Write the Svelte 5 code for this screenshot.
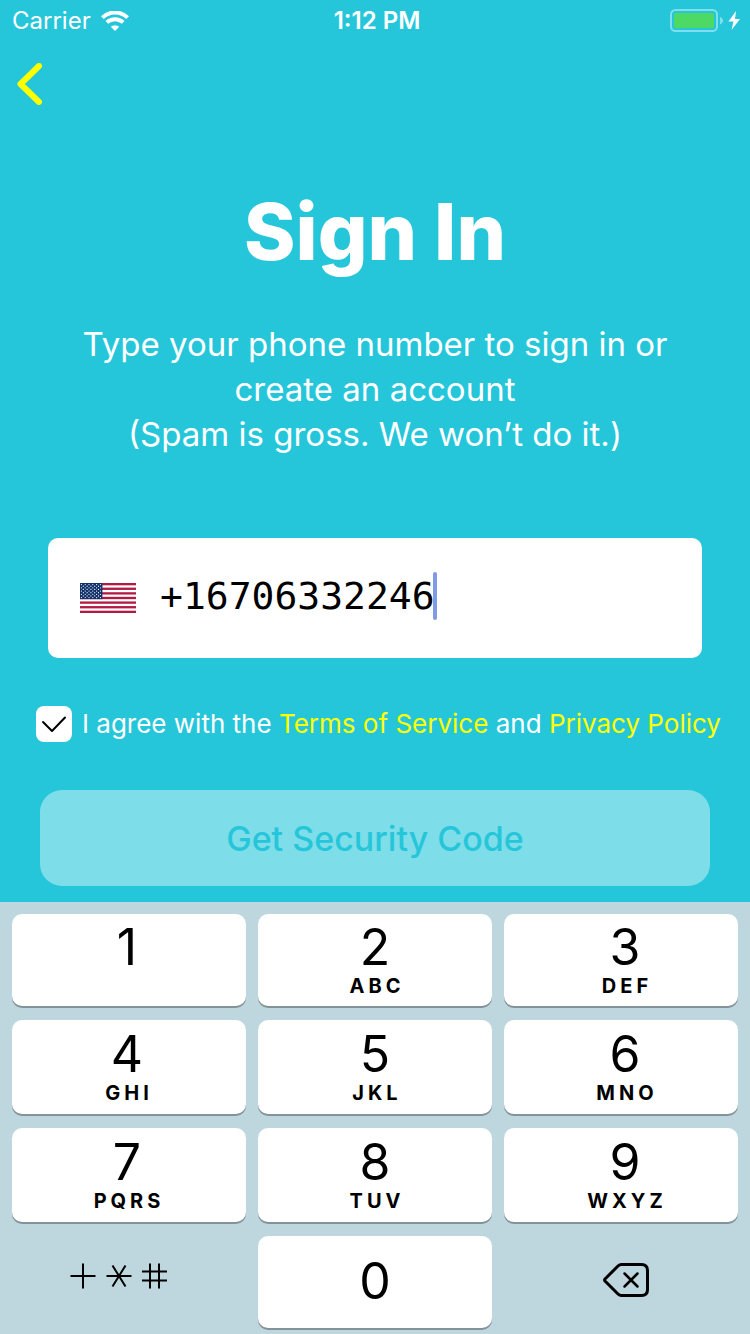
<script>
  let phone = $state('+16706332246');
  let agreed = $state(true);

  const keys = [
    { digit: '1', letters: '' },
    { digit: '2', letters: 'ABC' },
    { digit: '3', letters: 'DEF' },
    { digit: '4', letters: 'GHI' },
    { digit: '5', letters: 'JKL' },
    { digit: '6', letters: 'MNO' },
    { digit: '7', letters: 'PQRS' },
    { digit: '8', letters: 'TUV' },
    { digit: '9', letters: 'WXYZ' }
  ];

  const stripes = [0, 2, 4, 6, 8, 10, 12];
  const stars = Array.from({ length: 9 }, (_, row) =>
    Array.from({ length: row % 2 ? 5 : 6 }, (_, col) => ({
      x: 1.4 + col * 3.8 + (row % 2 ? 1.9 : 0),
      y: 1.6 + row * 1.62
    }))
  ).flat();

  const press = (digit) => (phone += digit);
  const erase = () => (phone = phone.slice(0, -1));
</script>

<div class="screen">
  <header class="status">
    <div class="carrier">
      <span>Carrier</span>
      <svg width="28" height="20" viewBox="0 0 28 20" aria-hidden="true">
        <g fill="none" stroke="#fff" stroke-width="4">
          <path d="M1.4 6.6A18 18 0 0 1 26.6 6.6" />
          <path d="M5.8 11.4A12 12 0 0 1 22.2 11.4" />
        </g>
        <path d="M9.8 15.8A6.2 6.2 0 0 1 18.2 15.8L14 20Z" fill="#fff" />
      </svg>
    </div>
    <time>1:12 PM</time>
    <div class="power">
      <svg width="72" height="24" viewBox="0 0 72 24" aria-hidden="true">
        <rect x="1" y="1" width="46" height="21" rx="4.5" fill="none" stroke="#7fdfea" stroke-width="2" />
        <rect x="4" y="4" width="40" height="15" rx="1.5" fill="#4cd964" />
        <path d="M50 8C54 9 54 14 50 15.5Z" fill="#7fdfea" />
        <path d="M66 2L58.5 12.5H63.5L61.5 21L70 10H65Z" fill="#fff" />
      </svg>
    </div>
  </header>

  <nav>
    <button class="back" type="button" aria-label="Back">
      <svg width="26" height="42" viewBox="0 0 26 42" aria-hidden="true">
        <path d="M22 3L3.5 21L22 39" fill="none" stroke="#ff0" stroke-width="6" stroke-linecap="round" stroke-linejoin="round" />
      </svg>
    </button>
  </nav>

  <main>
    <h1>Sign In</h1>
    <p class="intro">
      Type your phone number to sign in or<br />create an account<br />(Spam is gross. We won’t do it.)
    </p>

    <div class="field">
      <svg class="flag" width="56" height="30" viewBox="0 0 56 30" aria-hidden="true">
        <rect width="56" height="30" fill="#fff" />
        {#each stripes as n}
          <rect y={(n * 30) / 13} width="56" height={30 / 13} fill="#b31942" />
        {/each}
        <rect width="22.4" height="16.15" fill="#12316b" />
        {#each stars as star}
          <circle cx={star.x} cy={star.y} r="0.6" fill="#fff" />
        {/each}
      </svg>
      <input type="tel" aria-label="Phone number" size="12" bind:value={phone} />
      <span class="caret"></span>
    </div>

    <div class="agree">
      <input id="agree" type="checkbox" bind:checked={agreed} />
      <svg class="tick" width="36" height="36" viewBox="0 0 36 36" aria-hidden="true">
        {#if agreed}
          <path d="M7 16L16 25L29 11.5" fill="none" stroke="#000" stroke-width="2" stroke-linecap="round" stroke-linejoin="round" />
        {/if}
      </svg>
      <p>
        <label for="agree">I agree with the</label>
        <a href="#terms">Terms of Service</a> and <a href="#privacy">Privacy Policy</a>
      </p>
    </div>

    <button class="submit" type="button" disabled>Get Security Code</button>
  </main>

  <section class="keypad" aria-label="Keypad">
    {#each keys as key}
      <button class="key" type="button" onclick={() => press(key.digit)}>
        <span class="digit">{key.digit}</span>
        <span class="letters">{key.letters}</span>
      </button>
    {/each}
    <button class="key plain" type="button" aria-label="Symbols">
      <svg width="98" height="26" viewBox="0 0 98 26" aria-hidden="true">
        <g fill="none" stroke="#000" stroke-width="2">
          <path d="M0.5 13H25.5M13 0.5V25.5" />
          <path d="M36.5 13H61.5M42.5 2.5L55.5 23.5M55.5 2.5L42.5 23.5" />
          <path d="M72 8.5H97M72 17.5H97M80 0.5V25.5M89 0.5V25.5" />
        </g>
      </svg>
    </button>
    <button class="key zero" type="button" onclick={() => press('0')}>
      <span class="digit">0</span>
    </button>
    <button class="key plain delete" type="button" aria-label="Delete" onclick={erase}>
      <svg width="46" height="34" viewBox="0 0 46 34" aria-hidden="true">
        <g fill="none" stroke="#000" stroke-width="3" stroke-linecap="round" stroke-linejoin="round">
          <path d="M18.5 1.5H38.5Q44.5 1.5 44.5 7.5V26.5Q44.5 32.5 38.5 32.5H18.5Q16.5 32.5 15 31L2 18Q1.2 17 2 16L15 3Q16.5 1.5 18.5 1.5Z" />
          <path d="M21.5 10.5L34.5 23.5M34.5 10.5L21.5 23.5" stroke-width="2.5" />
        </g>
      </svg>
    </button>
  </section>
</div>

<style>
  :global(body) {
    margin: 0;
    background: #26c6da;
  }

  .screen {
    display: flex;
    flex-direction: column;
    min-height: 100vh;
    color: #fff;
    font-family: Inter, "Liberation Sans", sans-serif;
  }

  button {
    font-family: inherit;
    border: 0;
    padding: 0;
  }

  svg {
    display: block;
  }

  .status {
    display: grid;
    grid-template-columns: 1fr auto 1fr;
    align-items: center;
    box-sizing: border-box;
    height: 40px;
    padding: 2px 8px 0 12px;
    font-size: 24px;
    line-height: 30px;
  }

  .carrier {
    display: flex;
    align-items: center;
    gap: 10px;
  }

  time {
    font-weight: 600;
  }

  .power {
    display: flex;
    justify-content: flex-end;
  }

  nav {
    padding: 12px 8px;
  }

  .back {
    display: block;
    padding: 11px 9px;
    background: none;
  }

  main {
    display: flex;
    flex-direction: column;
    flex: 1;
    padding: 58px 36px 16px;
  }

  h1 {
    margin: 0;
    font-size: 78px;
    line-height: 92px;
    font-weight: 800;
    text-align: center;
  }

  .intro {
    margin: 44px 0 0;
    font-size: 33px;
    line-height: 45px;
    text-align: center;
  }

  .field {
    display: flex;
    align-items: center;
    height: 120px;
    margin: 81px 12px 0;
    padding: 0 32px;
    border-radius: 10px;
    background: #fff;
    box-sizing: border-box;
  }

  .flag {
    flex: none;
    margin-right: 24px;
  }

  .field input {
    field-sizing: content;
    padding: 0 0 4px;
    border: 0;
    outline: 0;
    background: none;
    color: #000;
    caret-color: transparent;
    font: 38px/48px "DejaVu Sans Mono", monospace;
  }

  .caret {
    width: 4px;
    height: 48px;
    margin: 0 0 4px -2px;
    border-radius: 2px;
    background: #8299e6;
  }

  .agree {
    display: grid;
    grid-template-columns: 36px 1fr;
    column-gap: 10px;
    align-items: center;
    margin-top: 48px;
    font-size: 26px;
    line-height: 36px;
    white-space: nowrap;
  }

  .agree input,
  .tick {
    grid-area: 1 / 1;
  }

  .agree input {
    appearance: none;
    width: 36px;
    height: 36px;
    margin: 0;
    border-radius: 8px;
    background: #fff;
  }

  .tick {
    pointer-events: none;
  }

  .agree p {
    margin: 0;
  }

  .agree a {
    color: #ff0;
    text-decoration: none;
  }

  .submit {
    height: 96px;
    margin: 48px 4px 0;
    border-radius: 22px;
    background: #7ddde9;
    color: #26c6da;
    font-size: 34px;
    font-weight: 500;
  }

  .keypad {
    display: grid;
    grid-template-columns: repeat(3, 1fr);
    grid-template-rows: 92px 94px 94px 92px;
    gap: 14px 12px;
    padding: 12px 12px 6px;
    background: #bed6de;
  }

  .key {
    display: flex;
    flex-direction: column;
    align-items: center;
    justify-content: center;
    padding-bottom: 6px;
    border-radius: 10px;
    background: #fff;
    box-shadow: 0 2px 0 #84939a;
    color: #000;
  }

  .key:nth-child(3n + 1) {
    padding-right: 4px;
  }

  .key:nth-child(3n) {
    padding-left: 8px;
  }

  .digit {
    font-size: 50px;
    line-height: 58px;
  }

  .letters {
    min-height: 20px;
    padding-left: 4px;
    font-size: 20px;
    line-height: 20px;
    font-weight: 700;
    letter-spacing: 4px;
  }

  .key.zero {
    padding: 0 0 2px;
  }

  .key.plain {
    padding: 0 20px 12px 0;
    background: none;
    box-shadow: none;
  }

  .key.delete {
    padding: 0 0 4px 10px;
  }
</style>
